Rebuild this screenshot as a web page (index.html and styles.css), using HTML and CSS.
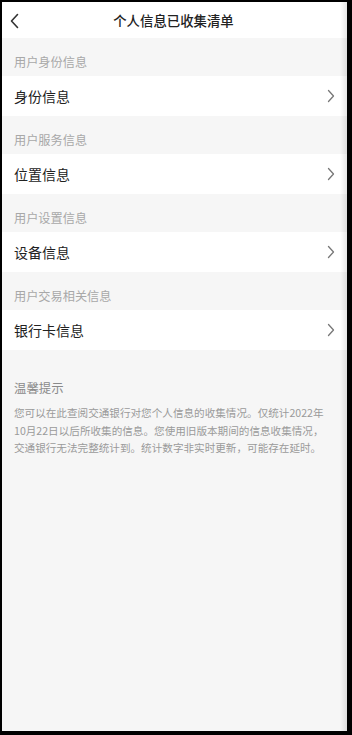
FILE: index.html
```html
<!DOCTYPE html>
<html lang="zh-CN">
<head>
<meta charset="utf-8">
<title>个人信息已收集清单</title>
<link rel="stylesheet" href="styles.css">
</head>
<body>
<div class="screen">
  <header class="topbar">
    <svg class="back" width="10" height="16" viewBox="0 0 10 16"><path d="M7.5 1.5 L1.5 8 L7.5 14.5" fill="none" stroke="#333" stroke-width="1.6" stroke-linecap="round" stroke-linejoin="round"/></svg>
    <h1 class="title">个人信息已收集清单</h1>
  </header>

  <div class="group-label">用户身份信息</div>
  <div class="row"><span class="row-text">身份信息</span><svg class="arrow" width="8" height="14" viewBox="0 0 8 14"><path d="M1.5 1.5 L6.5 7 L1.5 12.5" fill="none" stroke="#777" stroke-width="1.3" stroke-linecap="round" stroke-linejoin="round"/></svg></div>

  <div class="group-label">用户服务信息</div>
  <div class="row"><span class="row-text">位置信息</span><svg class="arrow" width="8" height="14" viewBox="0 0 8 14"><path d="M1.5 1.5 L6.5 7 L1.5 12.5" fill="none" stroke="#777" stroke-width="1.3" stroke-linecap="round" stroke-linejoin="round"/></svg></div>

  <div class="group-label">用户设置信息</div>
  <div class="row"><span class="row-text">设备信息</span><svg class="arrow" width="8" height="14" viewBox="0 0 8 14"><path d="M1.5 1.5 L6.5 7 L1.5 12.5" fill="none" stroke="#777" stroke-width="1.3" stroke-linecap="round" stroke-linejoin="round"/></svg></div>

  <div class="group-label">用户交易相关信息</div>
  <div class="row"><span class="row-text">银行卡信息</span><svg class="arrow" width="8" height="14" viewBox="0 0 8 14"><path d="M1.5 1.5 L6.5 7 L1.5 12.5" fill="none" stroke="#777" stroke-width="1.3" stroke-linecap="round" stroke-linejoin="round"/></svg></div>

  <section class="tips">
    <div class="tips-title">温馨提示</div>
    <p class="tips-text"><span class="line">您可以在此查阅交通银行对您个人信息的收集情况。仅统计2022年</span><span class="line">10月22日以后所收集的信息。您使用旧版本期间的信息收集情况，</span><span class="line">交通银行无法完整统计到。统计数字非实时更新，可能存在延时。</span></p>
  </section>
</div>
</body>
</html>
```

FILE: styles.css
```css
* { box-sizing: border-box; }
html, body { margin: 0; padding: 0; }
body {
  background: #000;
  width: 352px;
  height: 735px;
  overflow: hidden;
  font-family: "Noto Sans CJK SC", "Noto Sans", sans-serif;
}
.screen {
  position: relative;
  margin: 2px 5px 4px 2px;
  width: 345px;
  height: 729px;
  background: #f6f6f6;
  overflow: hidden;
}
.screen::after {
  content: "";
  position: absolute;
  top: 0;
  right: 0;
  width: 7px;
  height: 100%;
  background: linear-gradient(to right, rgba(0,0,0,0), rgba(0,0,0,0.10));
  pointer-events: none;
}
.topbar {
  height: 36px;
  background: #fff;
  display: flex;
  align-items: center;
  justify-content: center;
  position: relative;
}
.back {
  position: absolute;
  left: 8px;
  top: 11px;
}
.title {
  margin: 0;
  font-size: 13.4px;
  font-weight: 500;
  color: #222;
  line-height: 18px;
  margin-right: 2px;
}
.group-label {
  height: 38px;
  display: flex;
  align-items: flex-end;
  padding: 0 12px 6px;
  font-size: 12.2px;
  line-height: 16px;
  color: #a8a8a8;
}
.row {
  height: 40px;
  background: #fff;
  display: flex;
  align-items: center;
  justify-content: space-between;
  padding: 0 12px 0 12px;
}
.row-text {
  font-size: 14px;
  color: #222;
  line-height: 20px;
}
.arrow { display: block; margin-right: 0; }
.tips {
  padding: 30px 12px 0;
}
.tips-title {
  font-size: 12.4px;
  line-height: 16px;
  color: #8a8a8a;
}
.tips-text {
  margin: 8px 0 0;
  font-size: 10.6px;
  line-height: 17.5px;
  color: #9a9a9a;
}
.line {
  display: block;
  white-space: nowrap;
}
```
